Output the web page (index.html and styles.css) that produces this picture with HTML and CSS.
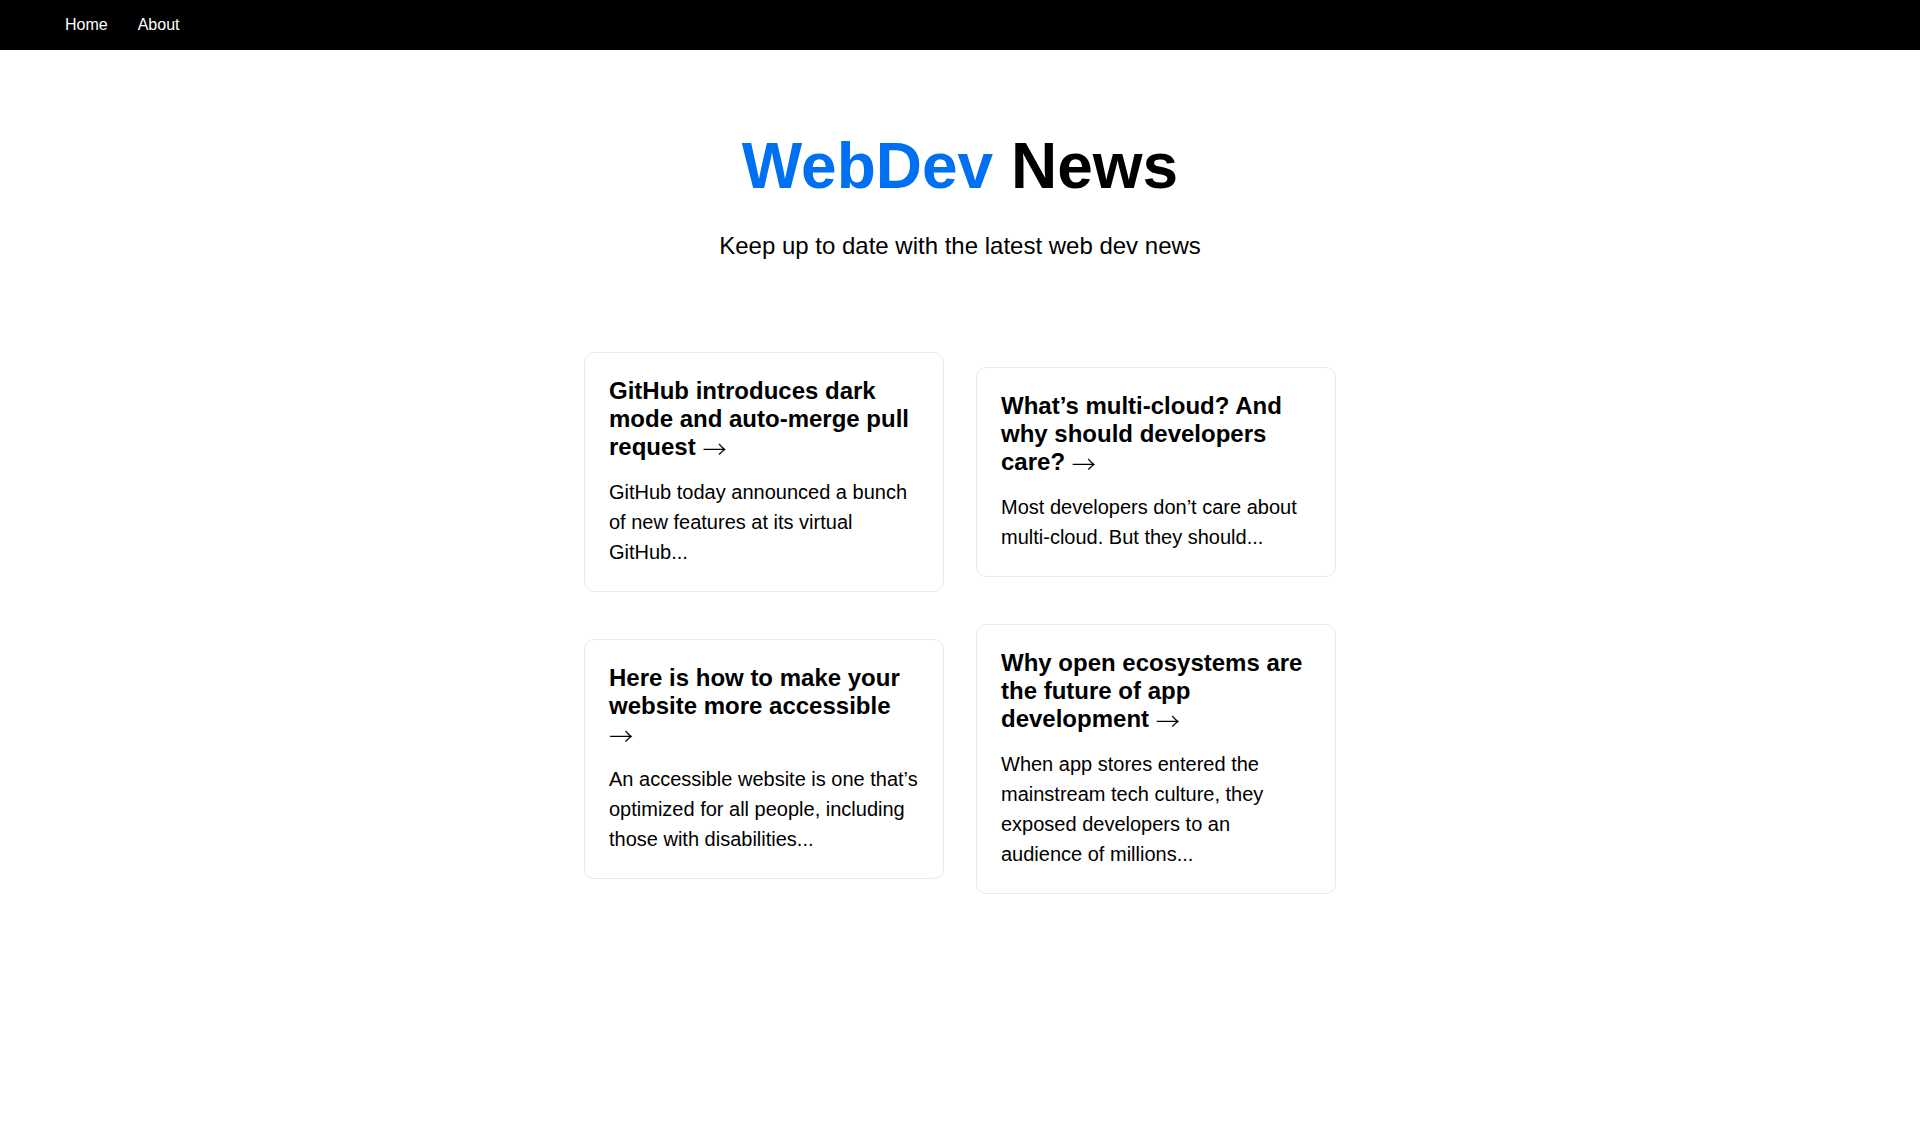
FILE: index.html
```html
<!DOCTYPE html>
<html lang="en">
<head>
<meta charset="utf-8">
<title>WebDev News</title>
<link rel="stylesheet" href="styles.css">
</head>
<body>
<nav class="nav">
  <ul class="nav-list">
    <li><a href="#">Home</a></li>
    <li><a href="#">About</a></li>
  </ul>
</nav>
<div class="container">
  <main class="main">
    <div class="header">
      <h1 class="title"><span class="accent">WebDev</span> News</h1>
      <p class="description">Keep up to date with the latest web dev news</p>
    </div>
    <div class="grid">
      <a href="#" class="card">
        <h3>GitHub introduces dark mode and auto-merge pull request <span class="arrow">&rarr;</span></h3>
        <p>GitHub today announced a bunch of new features at its virtual GitHub...</p>
      </a>
      <a href="#" class="card">
        <h3>What’s multi-cloud? And why should developers care? <span class="arrow">&rarr;</span></h3>
        <p>Most developers don’t care about multi-cloud. But they should...</p>
      </a>
      <a href="#" class="card">
        <h3>Here is how to make your website more accessible <span class="arrow">&rarr;</span></h3>
        <p>An accessible website is one that’s optimized for all people, including those with disabilities...</p>
      </a>
      <a href="#" class="card">
        <h3>Why open ecosystems are the future of app development <span class="arrow">&rarr;</span></h3>
        <p>When app stores entered the mainstream tech culture, they exposed developers to an audience of millions...</p>
      </a>
    </div>
  </main>
</div>
</body>
</html>
```

FILE: styles.css
```css
* {
  box-sizing: border-box;
}

html, body {
  margin: 0;
  padding: 0;
  font-family: "Liberation Sans", Arial, Helvetica, sans-serif;
  color: #000;
  background: #fff;
}

a {
  color: inherit;
  text-decoration: none;
}

.nav {
  height: 50px;
  padding: 10px;
  background: #000;
  color: #fff;
  display: flex;
  align-items: center;
  justify-content: flex-start;
}

.nav-list {
  display: flex;
  justify-content: center;
  align-items: center;
  list-style: none;
  margin: 16px 0;
  padding-left: 40px;
  font-size: 16px;
}

.nav-list a {
  margin: 5px 15px;
}

.container {
  padding: 0 0.5rem;
  display: flex;
  flex-direction: column;
  align-items: center;
}

.main {
  padding: 5rem 0;
  display: flex;
  flex-direction: column;
  align-items: center;
}

.header {
  display: flex;
  flex-direction: column;
  align-items: center;
}

.title {
  margin: 0;
  line-height: 1.15;
  font-size: 4rem;
  font-weight: bold;
  text-align: center;
}

.accent {
  color: #0070f3;
}

.description {
  line-height: 1.5;
  font-size: 1.5rem;
  text-align: center;
  margin: 24px 0;
}

.grid {
  display: flex;
  align-items: center;
  justify-content: center;
  flex-wrap: wrap;
  width: 800px;
  max-width: 800px;
  margin-top: 3rem;
}

.card {
  margin: 1rem;
  flex-basis: 45%;
  padding: 1.5rem;
  text-align: left;
  color: inherit;
  border: 1px solid #eaeaea;
  border-radius: 10px;
}

.card h3 {
  margin: 0 0 1rem 0;
  font-size: 1.5rem;
  font-weight: bold;
}

.arrow {
  font-family: "Noto Sans CJK JP", sans-serif;
  font-weight: 300;
  line-height: 0;
  vertical-align: -3px;
}

.card p {
  margin: 0;
  font-size: 1.25rem;
  line-height: 1.5;
}
```
